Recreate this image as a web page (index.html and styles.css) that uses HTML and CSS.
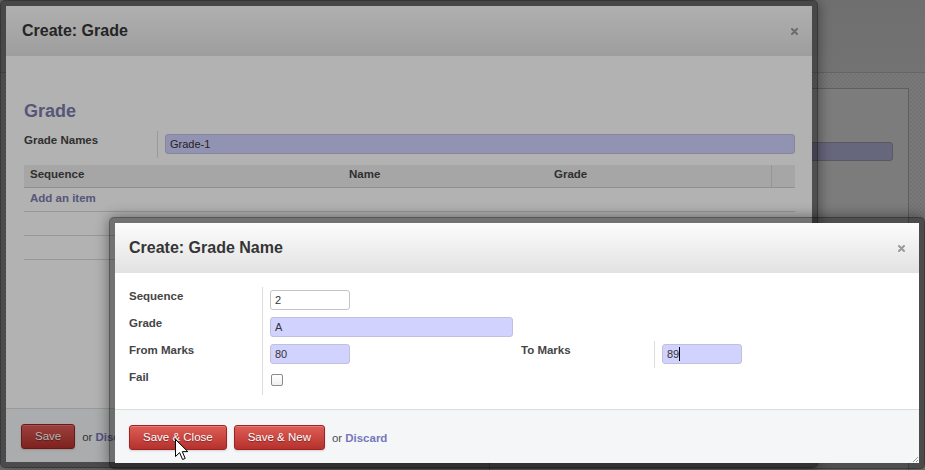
FILE: index.html
```html
<!DOCTYPE html>
<html>
<head>
<meta charset="utf-8">
<title>Create: Grade Name</title>
<link rel="stylesheet" href="styles.css">
</head>
<body>
<div class="app">
  <div class="app-top"></div>
  <div class="app-main">
    <div class="sheet">
      <div class="sheet-input"></div>
    </div>
  </div>
</div>

<div class="backdrop"></div>

<div class="dialog dialog-grade">
  <div class="dlg-header">
    <h2 class="dlg-title">Create: Grade</h2>
    <svg class="dlg-close" width="7" height="7" viewBox="0 0 7 7"><path d="M1 1L6 6M6 1L1 6" stroke="#9a9a9a" stroke-width="2" stroke-linecap="round"/></svg>
  </div>
  <div class="dlg-body grade-body">
    <h1 class="form-title">Grade</h1>
    <div class="field-row">
      <div class="lbl">Grade Names</div>
      <div class="fld"><div class="inp req">Grade-1</div></div>
    </div>
    <table class="list">
      <colgroup><col class="c-seq"><col class="c-name"><col class="c-grade"><col class="c-del"></colgroup>
      <thead>
        <tr><th>Sequence</th><th>Name</th><th>Grade</th><th class="th-del"></th></tr>
      </thead>
      <tbody>
        <tr><td colspan="4"><a class="add-item">Add an item</a></td></tr>
        <tr><td colspan="4"></td></tr>
        <tr><td colspan="4"></td></tr>
      </tbody>
    </table>
  </div>
  <div class="dlg-footer">
    <button class="btn">Save</button>
    <span class="or">or</span>
    <a class="link">Discard</a>
  </div>
</div>

<div class="backdrop"></div>

<div class="dialog dialog-line">
  <div class="dlg-header">
    <h2 class="dlg-title">Create: Grade Name</h2>
    <svg class="dlg-close" width="7" height="7" viewBox="0 0 7 7"><path d="M1 1L6 6M6 1L1 6" stroke="#9a9a9a" stroke-width="2" stroke-linecap="round"/></svg>
  </div>
  <div class="dlg-body line-body">
    <div class="lbl">Sequence</div>
    <div class="fld fld-wide"><div class="inp w-num">2</div></div>

    <div class="lbl">Grade</div>
    <div class="fld fld-wide"><div class="inp req w-char">A</div></div>

    <div class="lbl">From Marks</div>
    <div class="fld"><div class="inp req w-num">80</div></div>
    <div class="lbl">To Marks</div>
    <div class="fld"><div class="inp req w-num">89<span class="caret"></span></div></div>

    <div class="lbl">Fail</div>
    <div class="fld fld-wide"><span class="chk"></span></div>
  </div>
  <div class="dlg-footer">
    <button class="btn">Save &amp; Close</button>
    <button class="btn">Save &amp; New</button>
    <span class="or">or</span>
    <a class="link">Discard</a>
  </div>
  <svg class="grip" width="8" height="8" viewBox="0 0 8 8"><path d="M7 2L2 7M7 5L5 7" stroke="#9a9a9a" stroke-width="1"/></svg>
</div>

<svg class="cursor" width="14" height="22" viewBox="0 0 14 22"><path d="M0.5 0.5V17.5L4.6 13.6L7.6 20.5L10.2 19.4L7.3 12.6H12.8Z" fill="#fff" stroke="#000" stroke-width="1" stroke-linejoin="miter"/></svg>
</body>
</html>
```

FILE: styles.css
```css
* { box-sizing: border-box; }

html, body {
  margin: 0;
  padding: 0;
}

body {
  width: 925px;
  height: 470px;
  overflow: hidden;
  position: relative;
  font-family: "Liberation Sans", Arial, sans-serif;
  font-size: 11.5px;
  color: #4c4c4c;
  background: #f4f4f4;
}

/* underlying application page */
.app {
  height: 100%;
  display: flex;
  flex-direction: column;
  overflow: hidden;
}

.app-top {
  flex: none;
  height: 73px;
  background: linear-gradient(#e6e6e6, #ececec);
  border-bottom: 1px solid #d0d0d0;
}

.app-main {
  flex: 1;
  min-height: 0;
  display: flex;
  justify-content: flex-end;
  align-items: stretch;
  padding: 15px 16px 0 0;
  background: repeating-conic-gradient(#ececec 0 25%, #f9f9f9 0 50%) 0 0 / 4px 4px;
}

.sheet {
  width: 420px;
  background: #fff;
  border: 1px solid #c4c4c4;
  border-bottom: 0;
  padding: 53px 15px 0 0;
  display: flex;
  justify-content: flex-end;
  align-items: flex-start;
}

.sheet-input {
  width: 300px;
  height: 19px;
  background: #d2d2ff;
  border: 1px solid #b8b8cc;
  border-radius: 3px;
}

/* modal backdrop */
.backdrop {
  position: absolute;
  inset: 0;
  background: rgba(0, 0, 0, 0.3);
}

/* dialogs */
.dialog {
  position: absolute;
  display: flex;
  flex-direction: column;
  background: #fff;
  background-clip: padding-box;
  border: 6px solid rgba(0, 0, 0, 0.36);
  border-radius: 5px;
  box-shadow: 0 0 14px rgba(0, 0, 0, 0.45);
}

.dialog-grade {
  left: 0;
  top: 0;
  width: 818px;
  height: 468px;
}

.dialog-line {
  left: 109px;
  top: 217px;
  width: 816px;
  height: 252px;
}

.dlg-header {
  flex: none;
  height: 50px;
  display: flex;
  align-items: center;
  justify-content: space-between;
  padding: 0 14px 0 15px;
  background: linear-gradient(#fcfcfc, #e2e2e2);
}

.dialog-grade .dlg-header {
  padding-left: 16px;
}

.dialog-line .dlg-header {
  padding-left: 14px;
}

.dlg-title {
  margin: 0;
  font-size: 16px;
  line-height: 50px;
  font-weight: bold;
  color: #353535;
}

.dlg-close {
  display: block;
}

.dlg-body {
  flex: 1;
  min-height: 0;
  background: #fff;
}

/* first dialog: Grade form */
.grade-body {
  padding: 44px 17px 0 18px;
  overflow: hidden;
}

.form-title {
  margin: 0 0 9px;
  font-size: 18px;
  line-height: 22px;
  font-weight: bold;
  color: #7c7bad;
}

.field-row {
  display: flex;
  height: 27px;
}

.lbl {
  padding-top: 2px;
  font-weight: bold;
  line-height: 14px;
  color: #454545;
}

.field-row .lbl {
  width: 133px;
  flex: none;
}

.fld {
  border-left: 1px solid #dcdcdc;
  padding: 3px 0 0 7px;
}

.field-row .fld {
  flex: 1;
}

.inp {
  height: 20px;
  border: 1px solid #c4c4c4;
  border-radius: 3px;
  background: #fff;
  padding: 0 4px;
  font-size: 11px;
  line-height: 18px;
  color: #333;
  white-space: nowrap;
}

.inp.req {
  background: #d2d2ff;
  border-color: #bfc0dc;
}

.w-num { width: 80px; }
.w-char { width: 243px; }

.caret {
  display: inline-block;
  width: 1px;
  height: 14px;
  background: #000;
  vertical-align: -3px;
}

.chk {
  display: block;
  width: 12px;
  height: 12px;
  margin: 3px 0 0 1px;
  border: 1px solid #8a8a8a;
  border-radius: 2px;
  background: linear-gradient(#fff, #f0f0f0);
}

/* one2many list */
.list {
  width: 100%;
  margin-top: 7px;
  border-collapse: collapse;
  table-layout: fixed;
}

.c-seq { width: 319px; }
.c-name { width: 205px; }
.c-grade { width: 223px; }
.c-del { width: 24px; }

.list th {
  height: 22px;
  padding: 0 6px 2px;
  text-align: left;
  font-weight: bold;
  line-height: 19px;
  color: #454545;
  background: #eeeeee;
  border-bottom: 1px solid #cfcfcf;
}

.list th.th-del {
  border-left: 1px solid #d6d6d6;
}

.list td {
  height: 24px;
  padding: 0 6px 2px;
  line-height: 21px;
  border-bottom: 1px solid #d9d9d9;
}

.list tbody tr:first-child td {
  height: 23px;
}

.add-item {
  font-weight: bold;
  color: #7c7bad;
}

/* footer */
.dlg-footer {
  flex: none;
  height: 54px;
  display: flex;
  align-items: center;
  padding: 2px 15px 0;
  border-top: 1px solid #dcdcdc;
  background: #f5f6f8;
}

.dialog-line .dlg-footer {
  padding-left: 14px;
}

.btn {
  height: 25px;
  margin: 0 7px 0 0;
  padding: 0 13px;
  border: 1px solid #9e2222;
  border-radius: 3px;
  background: linear-gradient(#df5d57, #b5312d);
  box-shadow: inset 0 1px 0 rgba(255, 255, 255, 0.2), 0 1px 2px rgba(0, 0, 0, 0.15);
  color: #fff;
  font-family: "Liberation Sans", Arial, sans-serif;
  font-size: 11.5px;
  line-height: 23px;
  text-shadow: 0 1px 1px rgba(0, 0, 0, 0.4);
}

.or {
  color: #4c4c4c;
  margin-right: 3px;
}

.link {
  font-weight: bold;
  color: #7776b8;
}

/* second dialog: Grade Name form */
.line-body {
  display: grid;
  grid-template-columns: 133px 259px 133px 1fr;
  grid-auto-rows: 27px;
  align-content: start;
  padding: 14px 14px;
}

.fld-wide {
  grid-column: span 3;
}

.grip {
  position: absolute;
  right: 0;
  bottom: 0;
}

.cursor {
  position: absolute;
  left: 175px;
  top: 439px;
}
```
